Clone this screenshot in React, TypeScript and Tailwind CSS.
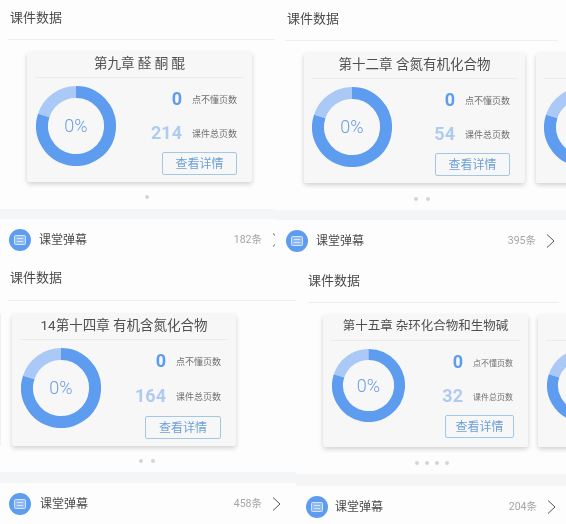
const BLUE = '#5e9cf0';

type PanelConfig = {
  panel: string;
  header: string;
  divider: string;
  carousel: string;
  card: string;
  cardBody: string;
  chapter: string;
  chapterSize: string;
  total: string;
  donut: string;
  statGap: string;
  labelSize: string;
  buttonWidth: string;
  dots: string;
  dotCount: number;
  band: string;
  row: string;
  count: string;
  peekNext: boolean;
  peekPrev: boolean;
};

const panels: PanelConfig[] = [
  {
    panel: 'w-[275px] h-[262px]',
    header: 'h-[39px] pl-[10px] pb-[3px]',
    divider: 'ml-[8px]',
    carousel: 'pt-[12px] pl-[27px] gap-[11px]',
    card: 'w-[225px] h-[130px]',
    cardBody: 'pl-[9px] pr-[15px]',
    chapter: '第九章 醛 酮 醌',
    chapterSize: 'text-[13.5px]',
    total: '214',
    donut: 'w-[80px] h-[80px]',
    statGap: 'gap-[14px]',
    labelSize: 'text-[9px] w-[45px]',
    buttonWidth: 'w-[75px]',
    dots: 'h-[27px] pt-[13px] pl-[145px] gap-[8px]',
    dotCount: 1,
    band: 'h-[10px]',
    row: 'w-[281px] pl-[9px] gap-[8px]',
    count: '182条',
    peekNext: false,
    peekPrev: false,
  },
  {
    panel: 'w-[291px] h-[262px]',
    header: 'h-[40px] pl-[12px] pb-[3px]',
    divider: 'ml-[10px] mr-[8px]',
    carousel: 'pt-[12px] pl-[29px] gap-[11px]',
    card: 'w-[221px] h-[130px]',
    cardBody: 'pl-[8px] pr-[15px]',
    chapter: '第十二章 含氮有机化合物',
    chapterSize: 'text-[13.5px]',
    total: '54',
    donut: 'w-[80px] h-[80px]',
    statGap: 'gap-[14px]',
    labelSize: 'text-[9px] w-[45px]',
    buttonWidth: 'w-[75px]',
    dots: 'h-[27px] pt-[14px] pl-[139px] gap-[8px]',
    dotCount: 2,
    band: 'h-[10px]',
    row: 'w-[280px] pl-[11px] gap-[8px]',
    count: '395条',
    peekNext: true,
    peekPrev: false,
  },
  {
    panel: 'w-[296px] h-[262px]',
    header: 'h-[38px] pl-[10px] pb-[6px]',
    divider: 'ml-[8px]',
    carousel: 'pt-[13px] gap-[11px]',
    card: 'w-[224px] h-[132px]',
    cardBody: 'pl-[9px] pr-[15px]',
    chapter: '14第十四章 有机含氮化合物',
    chapterSize: 'text-[13.5px]',
    total: '164',
    donut: 'w-[80px] h-[80px]',
    statGap: 'gap-[15px]',
    labelSize: 'text-[9px] w-[45px]',
    buttonWidth: 'w-[76px]',
    dots: 'h-[26px] pt-[13px] pl-[139px] gap-[8px]',
    dotCount: 2,
    band: 'h-[11px]',
    row: 'w-[281px] pl-[9px] gap-[9px]',
    count: '458条',
    peekNext: false,
    peekPrev: true,
  },
  {
    panel: 'w-[270px] h-[262px]',
    header: 'h-[40px] pl-[12px] pb-[2px]',
    divider: 'ml-[12px] mr-[7px]',
    carousel: 'pt-[12px] pl-[27px] gap-[10px]',
    card: 'w-[205px] h-[132px]',
    cardBody: 'pl-[9px] pr-[14px]',
    chapter: '第十五章 杂环化合物和生物碱',
    chapterSize: 'text-[12.5px]',
    total: '32',
    donut: 'w-[73px] h-[73px]',
    statGap: 'gap-[14px]',
    labelSize: 'text-[8px] w-[41px]',
    buttonWidth: 'w-[69px]',
    dots: 'h-[27px] pt-[14px] pl-[119px] gap-[6px]',
    dotCount: 4,
    band: 'h-[12px]',
    row: 'w-[260px] pl-[10px] gap-[7px]',
    count: '204条',
    peekNext: true,
    peekPrev: false,
  },
];

function Donut({ size, showValue }: { size: string; showValue: boolean }) {
  return (
    <div className={`relative shrink-0 ${size}`}>
      <svg viewBox="0 0 80 80" className="w-full h-full">
        <path d="M40 6 A34 34 0 0 0 7.7 29.5" fill="none" stroke="#abc9f6" strokeWidth="12" />
        <path d="M40 6 A34 34 0 1 1 7.7 29.5" fill="none" stroke={BLUE} strokeWidth="12" />
      </svg>
      {showValue && (
        <span className="absolute inset-0 flex items-center justify-center text-[18px] leading-none text-[#6b9fdf] font-light">
          0%
        </span>
      )}
    </div>
  );
}

function Stat({ value, label, light, labelSize }: { value: string; label: string; light?: boolean; labelSize: string }) {
  return (
    <div className="flex items-center justify-end h-[20px] gap-[10px]">
      <span className={`text-[18px] leading-none font-bold ${light ? 'text-[#b0cbf1]' : 'text-[#5e9cf0]'}`}>{value}</span>
      <span className={`${labelSize} pt-[3px] whitespace-nowrap text-[#6f6f6f]`}>{label}</span>
    </div>
  );
}

function Card({ config, peek }: { config: PanelConfig; peek?: boolean }) {
  return (
    <div className={`shrink-0 bg-[#f7f7f8] rounded-[2px] shadow-[0_2px_5px_rgba(0,0,0,0.18)] flex flex-col ${config.card}`}>
      <div className={`h-[25px] pb-[2px] flex items-center justify-center leading-none whitespace-nowrap text-[#4f4f4f] ${config.chapterSize}`}>
        {peek ? '' : config.chapter}
      </div>
      <div className="mx-[8px] h-px bg-[#ebebeb]" />
      <div className={`flex justify-between pt-[8px] ${config.cardBody}`}>
        <Donut size={config.donut} showValue={!peek} />
        {!peek && (
          <div className={`flex flex-col pt-[3px] items-end ${config.statGap}`}>
            <Stat value="0" label="点不懂页数" labelSize={config.labelSize} />
            <Stat value={config.total} label="课件总页数" light labelSize={config.labelSize} />
            <button className={`-mt-[5px] h-[23px] rounded-[2px] border border-[#a3c8e6] text-[12px] leading-none text-[#6ba1d8] ${config.buttonWidth}`}>
              查看详情
            </button>
          </div>
        )}
      </div>
    </div>
  );
}

function CommentIcon() {
  return (
    <span className="shrink-0 w-[22px] h-[22px] rounded-full bg-[#5e9cf0] flex items-center justify-center">
      <svg viewBox="0 0 12 10" className="w-[12px] h-[10px]" fill="#8db9f4" stroke="#d5e5fb" strokeWidth="1">
        <rect x="0.5" y="0.5" width="11" height="9" rx="1" />
        <path d="M3 3.5h6M3 6.5h6" />
      </svg>
    </span>
  );
}

function Panel({ config }: { config: PanelConfig }) {
  return (
    <section className={`shrink-0 overflow-hidden bg-[#fdfdfd] flex flex-col ${config.panel}`}>
      <h2 className={`shrink-0 flex items-center text-[13px] font-normal text-[#4a4a4a] ${config.header}`}>课件数据</h2>
      <div className={`shrink-0 h-px bg-[#eeeeee] ${config.divider}`} />
      <div className={`shrink-0 flex ${config.carousel}`}>
        {config.peekPrev && <div className="shrink-0 w-px bg-[#f0f0f1]" />}
        <Card config={config} />
        {config.peekNext && <Card config={config} peek />}
      </div>
      <div className={`shrink-0 flex items-start ${config.dots}`}>
        {Array.from({ length: config.dotCount }).map((_, i) => (
          <span key={i} className="w-[4px] h-[4px] rounded-full bg-[#d4d5d7]" />
        ))}
      </div>
      <div className={`shrink-0 bg-[#f4f5f7] ${config.band}`} />
      <div className={`shrink-0 flex items-center h-[42px] ${config.row}`}>
        <CommentIcon />
        <span className="text-[12px] text-[#4a4a4a]">课堂弹幕</span>
        <div className="ml-auto flex items-center gap-[10px]">
          <span className="text-[10.5px] text-[#a5a5a5]">{config.count}</span>
          <svg viewBox="0 0 9 14" className="w-[9px] h-[14px] shrink-0" fill="none" stroke="#555555" strokeWidth="1">
            <path d="M1 0.5 L8 7 L1 13.5" />
          </svg>
        </div>
      </div>
    </section>
  );
}

export default function App() {
  return (
    <div className="w-[566px] h-[524px] overflow-hidden bg-[#fdfdfd] font-[Roboto,'Noto_Sans_CJK_SC',sans-serif] blur-[0.5px]">
      <div className="flex">
        <Panel config={panels[0]} />
        <Panel config={panels[1]} />
      </div>
      <div className="flex">
        <Panel config={panels[2]} />
        <Panel config={panels[3]} />
      </div>
    </div>
  );
}
